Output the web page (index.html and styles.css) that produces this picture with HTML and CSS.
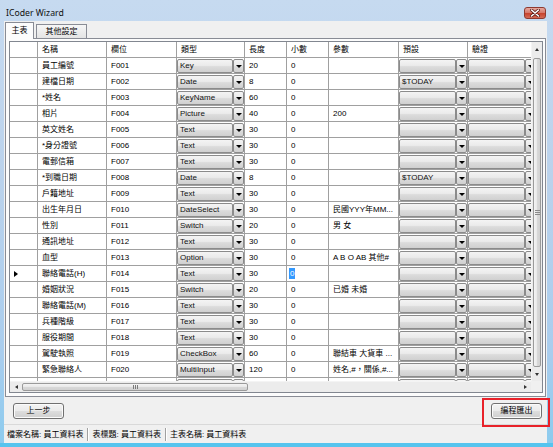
FILE: index.html
```html
<!DOCTYPE html>
<html>
<head>
<meta charset="utf-8">
<title>ICoder Wizard</title>
<link rel="stylesheet" href="styles.css">
</head>
<body>
<div class="window">
  <div class="titlebar">
    <span class="title">ICoder Wizard</span>
    <span class="close"><svg width="10" height="8" viewBox="0 0 10 8"><path d="M1.5 1 L8.5 7 M8.5 1 L1.5 7" stroke="#5a1a14" stroke-width="3" stroke-linecap="round"/><path d="M1.5 1 L8.5 7 M8.5 1 L1.5 7" stroke="#fff" stroke-width="1.6" stroke-linecap="round"/></svg></span>
  </div>
  <div class="client">
    <div class="tabs">
      <span class="tab active">主表</span>
      <span class="tab other">其他設定</span>
    </div>
    <div class="panel">
      <div class="grid">
        <div class="cells">
          <div class="row head">
            <div class="c rh"></div><div class="c">名稱</div><div class="c">欄位</div><div class="c">類型</div><div class="c">長度</div><div class="c">小數</div><div class="c">參數</div><div class="c">預設</div><div class="c">驗證</div>
          </div>
          <div class="row"><div class="c rh"></div><div class="c">員工編號</div><div class="c">F001</div><div class="c dd"><span class="dd-box">Key</span><span class="dd-btn"></span></div><div class="c">20</div><div class="c">0</div><div class="c"></div><div class="c dd"><span class="dd-box"></span><span class="dd-btn"></span></div><div class="c dd"><span class="dd-box"></span><span class="dd-btn"></span></div></div>
          <div class="row"><div class="c rh"></div><div class="c">建檔日期</div><div class="c">F002</div><div class="c dd"><span class="dd-box">Date</span><span class="dd-btn"></span></div><div class="c">8</div><div class="c">0</div><div class="c"></div><div class="c dd"><span class="dd-box">$TODAY</span><span class="dd-btn"></span></div><div class="c dd"><span class="dd-box"></span><span class="dd-btn"></span></div></div>
          <div class="row"><div class="c rh"></div><div class="c">*姓名</div><div class="c">F003</div><div class="c dd"><span class="dd-box">KeyName</span><span class="dd-btn"></span></div><div class="c">60</div><div class="c">0</div><div class="c"></div><div class="c dd"><span class="dd-box"></span><span class="dd-btn"></span></div><div class="c dd"><span class="dd-box"></span><span class="dd-btn"></span></div></div>
          <div class="row"><div class="c rh"></div><div class="c">相片</div><div class="c">F004</div><div class="c dd"><span class="dd-box">Picture</span><span class="dd-btn"></span></div><div class="c">40</div><div class="c">0</div><div class="c">200</div><div class="c dd"><span class="dd-box"></span><span class="dd-btn"></span></div><div class="c dd"><span class="dd-box"></span><span class="dd-btn"></span></div></div>
          <div class="row"><div class="c rh"></div><div class="c">英文姓名</div><div class="c">F005</div><div class="c dd"><span class="dd-box">Text</span><span class="dd-btn"></span></div><div class="c">30</div><div class="c">0</div><div class="c"></div><div class="c dd"><span class="dd-box"></span><span class="dd-btn"></span></div><div class="c dd"><span class="dd-box"></span><span class="dd-btn"></span></div></div>
          <div class="row"><div class="c rh"></div><div class="c">*身分證號</div><div class="c">F006</div><div class="c dd"><span class="dd-box">Text</span><span class="dd-btn"></span></div><div class="c">30</div><div class="c">0</div><div class="c"></div><div class="c dd"><span class="dd-box"></span><span class="dd-btn"></span></div><div class="c dd"><span class="dd-box"></span><span class="dd-btn"></span></div></div>
          <div class="row"><div class="c rh"></div><div class="c">電郵信箱</div><div class="c">F007</div><div class="c dd"><span class="dd-box">Text</span><span class="dd-btn"></span></div><div class="c">30</div><div class="c">0</div><div class="c"></div><div class="c dd"><span class="dd-box"></span><span class="dd-btn"></span></div><div class="c dd"><span class="dd-box"></span><span class="dd-btn"></span></div></div>
          <div class="row"><div class="c rh"></div><div class="c">*到職日期</div><div class="c">F008</div><div class="c dd"><span class="dd-box">Date</span><span class="dd-btn"></span></div><div class="c">8</div><div class="c">0</div><div class="c"></div><div class="c dd"><span class="dd-box">$TODAY</span><span class="dd-btn"></span></div><div class="c dd"><span class="dd-box"></span><span class="dd-btn"></span></div></div>
          <div class="row"><div class="c rh"></div><div class="c">戶籍地址</div><div class="c">F009</div><div class="c dd"><span class="dd-box">Text</span><span class="dd-btn"></span></div><div class="c">30</div><div class="c">0</div><div class="c"></div><div class="c dd"><span class="dd-box"></span><span class="dd-btn"></span></div><div class="c dd"><span class="dd-box"></span><span class="dd-btn"></span></div></div>
          <div class="row"><div class="c rh"></div><div class="c">出生年月日</div><div class="c">F010</div><div class="c dd"><span class="dd-box">DateSelect</span><span class="dd-btn"></span></div><div class="c">30</div><div class="c">0</div><div class="c">民國YYY年MM...</div><div class="c dd"><span class="dd-box"></span><span class="dd-btn"></span></div><div class="c dd"><span class="dd-box"></span><span class="dd-btn"></span></div></div>
          <div class="row"><div class="c rh"></div><div class="c">性別</div><div class="c">F011</div><div class="c dd"><span class="dd-box">Switch</span><span class="dd-btn"></span></div><div class="c">20</div><div class="c">0</div><div class="c">男 女</div><div class="c dd"><span class="dd-box"></span><span class="dd-btn"></span></div><div class="c dd"><span class="dd-box"></span><span class="dd-btn"></span></div></div>
          <div class="row"><div class="c rh"></div><div class="c">通訊地址</div><div class="c">F012</div><div class="c dd"><span class="dd-box">Text</span><span class="dd-btn"></span></div><div class="c">30</div><div class="c">0</div><div class="c"></div><div class="c dd"><span class="dd-box"></span><span class="dd-btn"></span></div><div class="c dd"><span class="dd-box"></span><span class="dd-btn"></span></div></div>
          <div class="row"><div class="c rh"></div><div class="c">血型</div><div class="c">F013</div><div class="c dd"><span class="dd-box">Option</span><span class="dd-btn"></span></div><div class="c">30</div><div class="c">0</div><div class="c">A B O AB 其他#</div><div class="c dd"><span class="dd-box"></span><span class="dd-btn"></span></div><div class="c dd"><span class="dd-box"></span><span class="dd-btn"></span></div></div>
          <div class="row"><div class="c rh"><span class="indicator"></span></div><div class="c">聯絡電話(H)</div><div class="c">F014</div><div class="c dd"><span class="dd-box">Text</span><span class="dd-btn"></span></div><div class="c">30</div><div class="c edit"><span class="sel">0</span></div><div class="c"></div><div class="c dd"><span class="dd-box"></span><span class="dd-btn"></span></div><div class="c dd"><span class="dd-box"></span><span class="dd-btn"></span></div></div>
          <div class="row"><div class="c rh"></div><div class="c">婚姻狀況</div><div class="c">F015</div><div class="c dd"><span class="dd-box">Switch</span><span class="dd-btn"></span></div><div class="c">20</div><div class="c">0</div><div class="c">已婚 未婚</div><div class="c dd"><span class="dd-box"></span><span class="dd-btn"></span></div><div class="c dd"><span class="dd-box"></span><span class="dd-btn"></span></div></div>
          <div class="row"><div class="c rh"></div><div class="c">聯絡電話(M)</div><div class="c">F016</div><div class="c dd"><span class="dd-box">Text</span><span class="dd-btn"></span></div><div class="c">30</div><div class="c">0</div><div class="c"></div><div class="c dd"><span class="dd-box"></span><span class="dd-btn"></span></div><div class="c dd"><span class="dd-box"></span><span class="dd-btn"></span></div></div>
          <div class="row"><div class="c rh"></div><div class="c">兵種階級</div><div class="c">F017</div><div class="c dd"><span class="dd-box">Text</span><span class="dd-btn"></span></div><div class="c">30</div><div class="c">0</div><div class="c"></div><div class="c dd"><span class="dd-box"></span><span class="dd-btn"></span></div><div class="c dd"><span class="dd-box"></span><span class="dd-btn"></span></div></div>
          <div class="row"><div class="c rh"></div><div class="c">服役期間</div><div class="c">F018</div><div class="c dd"><span class="dd-box">Text</span><span class="dd-btn"></span></div><div class="c">30</div><div class="c">0</div><div class="c"></div><div class="c dd"><span class="dd-box"></span><span class="dd-btn"></span></div><div class="c dd"><span class="dd-box"></span><span class="dd-btn"></span></div></div>
          <div class="row"><div class="c rh"></div><div class="c">駕駛執照</div><div class="c">F019</div><div class="c dd"><span class="dd-box">CheckBox</span><span class="dd-btn"></span></div><div class="c">60</div><div class="c">0</div><div class="c">聯結車 大貨車 ...</div><div class="c dd"><span class="dd-box"></span><span class="dd-btn"></span></div><div class="c dd"><span class="dd-box"></span><span class="dd-btn"></span></div></div>
          <div class="row"><div class="c rh"></div><div class="c">緊急聯絡人</div><div class="c">F020</div><div class="c dd"><span class="dd-box">MultiInput</span><span class="dd-btn"></span></div><div class="c">120</div><div class="c">0</div><div class="c">姓名,#，關係,#...</div><div class="c dd"><span class="dd-box"></span><span class="dd-btn"></span></div><div class="c dd"><span class="dd-box"></span><span class="dd-btn"></span></div></div>
          <div class="row"><div class="c rh"></div><div class="c"></div><div class="c"></div><div class="c dd"><span class="dd-box"></span><span class="dd-btn"></span></div><div class="c"></div><div class="c"></div><div class="c"></div><div class="c dd"><span class="dd-box"></span><span class="dd-btn"></span></div><div class="c dd"><span class="dd-box"></span><span class="dd-btn"></span></div></div>
        </div>
        <div class="vscroll">
          <div class="vs-btn"><span class="tri-up"></span></div>
          <div class="vs-thumb"><span class="grip-v"></span></div>
          <div class="vs-btn down"><span class="tri-down"></span></div>
        </div>
        <div class="hscroll">
          <div class="hs-btn"><span class="tri-left"></span></div>
          <div class="hs-thumb"><span class="grip-h"></span></div>
          <div class="hs-track"></div>
          <div class="hs-btn"><span class="tri-right"></span></div>
        </div>
        <div class="corner"></div>
      </div>
    </div>
    <div class="actions">
      <span class="btn">上一步</span>
      <span class="btn-wrap"><span class="btn">編程匯出</span></span>
    </div>
    <div class="status">
      <span class="st first">檔案名稱: 員工資料表</span>
      <span class="st">表標題: 員工資料表</span>
      <span class="st last">主表名稱: 員工資料表</span>
    </div>
  </div>
</div>
</body>
</html>
```

FILE: styles.css
```css
* { box-sizing: border-box; }
html, body { margin: 0; padding: 0; }
body {
  width: 553px;
  height: 447px;
  overflow: hidden;
  background: #fff;
  font-family: "Liberation Sans", "Noto Sans CJK TC", sans-serif;
  font-size: 8px;
  color: #000;
}
.window {
  width: 553px;
  height: 447px;
  display: flex;
  flex-direction: column;
  padding: 0 6px 0 4px;
  background: linear-gradient(to bottom, #c6daf0 0, #bad2ec 40%, #a9cdee 80%, #8ccbee 100%);
  border-bottom: 4px solid #56c4ee;
}
.titlebar {
  height: 21px;
  flex: none;
  display: flex;
  justify-content: space-between;
  align-items: flex-start;
}
.title {
  font-family: "Noto Sans", "Liberation Sans", sans-serif;
  font-size: 8.7px;
  line-height: 12px;
  margin: 7px 0 0 2px;
  color: #101010;
}
.close {
  width: 22px;
  height: 12px;
  margin: 7px 1px 0 0;
  border: 1px solid #8e3a30;
  border-radius: 3px;
  background: linear-gradient(to bottom, #e6a89e 0, #d77a6c 45%, #c8442f 55%, #d46a55 100%);
  display: flex;
  align-items: center;
  justify-content: center;
}
.client {
  flex: 1;
  background: #f0f0f0;
  display: flex;
  flex-direction: column;
}
.tabs {
  height: 17px;
  flex: none;
  display: flex;
  align-items: flex-end;
  padding-left: 1px;
  position: relative;
  z-index: 1;
}
.tab {
  height: 14px;
  border: 1px solid #898c95;
  border-bottom: none;
  text-align: center;
  line-height: 13px;
  background: linear-gradient(to bottom, #f6f6f6, #e4e4e4);
  margin-right: 1px;
}
.tab.active {
  width: 29px;
  height: 17px;
  margin-bottom: -1px;
  background: #fcfcfc;
  line-height: 16px;
}
.tab.other {
  width: 51px;
  margin-left: 1px;
}
.panel {
  height: 359px;
  flex: none;
  margin: 0 1px;
  border: 1px solid #898c95;
  background: #fcfcfc;
  padding: 2px 2px 3px 3px;
}
.grid {
  width: 534px;
  height: 352px;
  border: 1px solid #828790;
  background: #fff;
  display: grid;
  grid-template-columns: 521px 11px;
  grid-template-rows: 339px 11px;
}
.cells { overflow: hidden; }
.row {
  display: grid;
  grid-template-columns: 28px 69px 70px 68px 42px 42px 70px 69px 69px;
  width: 527px;
  height: 16px;
}
.c {
  border-right: 1px solid #a0a0a0;
  border-bottom: 1px solid #a0a0a0;
  padding-left: 4px;
  line-height: 15px;
  white-space: nowrap;
  overflow: hidden;
}
.head .c { background: #fff; }
.rh {
  padding-left: 4px;
  display: flex;
  align-items: center;
}
.indicator {
  width: 0;
  height: 0;
  border-left: 4px solid #000;
  border-top: 3px solid transparent;
  border-bottom: 3px solid transparent;
}
.dd {
  display: flex;
  padding: 1px 0 0 0;
}
.dd-box, .dd-btn {
  height: 14px;
  border: 1px solid #8b8b8b;
  border-radius: 2px;
  background: linear-gradient(to bottom, #f4f4f4 0, #ebebeb 45%, #dcdcdc 55%, #d0d0d0 100%);
}
.dd-box {
  flex: 1;
  min-width: 0;
  line-height: 12px;
  padding-left: 2px;
  overflow: hidden;
  color: #111;
}
.dd-btn {
  width: 11px;
  flex: none;
  display: flex;
  align-items: center;
  justify-content: center;
}
.dd-btn::after {
  content: "";
  width: 0;
  height: 0;
  border-left: 3px solid transparent;
  border-right: 3px solid transparent;
  border-top: 3px solid #000;
}
.edit { padding-left: 2px; }
.sel {
  display: inline-block;
  background: #3399ff;
  color: #fff;
  line-height: 11px;
  padding: 0 1px;
  vertical-align: middle;
}
.vscroll {
  grid-row: 1;
  grid-column: 2;
  display: flex;
  flex-direction: column;
  background: #ececec;
  border-left: 1px solid #f4f4f4;
}
.vs-btn {
  height: 15px;
  flex: none;
  display: flex;
  align-items: center;
  justify-content: center;
}
.vs-btn.down { height: 13px; }
.vs-thumb {
  flex: 1;
  margin: 1px 1px;
  border: 1px solid #9a9a9a;
  border-radius: 2px;
  background: linear-gradient(to right, #f4f4f4 0, #e8e8e8 50%, #d9d9d9 51%, #d2d2d2 100%);
  display: flex;
  align-items: center;
  justify-content: center;
}
.grip-v {
  width: 5px;
  height: 5px;
  border-top: 1px solid #8a8a8a;
  border-bottom: 1px solid #8a8a8a;
  background: linear-gradient(to bottom, transparent 1px, #8a8a8a 1px, #8a8a8a 2px, transparent 2px);
}
.hscroll {
  grid-row: 2;
  grid-column: 1;
  display: flex;
  background: #ececec;
  border-top: 1px solid #f4f4f4;
}
.hs-btn {
  width: 12px;
  flex: none;
  display: flex;
  align-items: center;
  justify-content: center;
}
.hs-thumb {
  width: 226px;
  flex: none;
  margin: 1px 0;
  border: 1px solid #9a9a9a;
  border-radius: 2px;
  background: linear-gradient(to bottom, #f4f4f4 0, #e8e8e8 50%, #d9d9d9 51%, #d2d2d2 100%);
  display: flex;
  align-items: center;
  justify-content: center;
}
.grip-h {
  width: 5px;
  height: 4px;
  border-left: 1px solid #7a7a7a;
  border-right: 1px solid #7a7a7a;
  background: linear-gradient(to right, transparent 1px, #7a7a7a 1px, #7a7a7a 2px, transparent 2px);
}
.hs-track { flex: 1; }
.corner {
  grid-row: 2;
  grid-column: 2;
  background: #f0f0f0;
}
.tri-up, .tri-down, .tri-left, .tri-right { width: 0; height: 0; }
.tri-up { border-left: 2.5px solid transparent; border-right: 2.5px solid transparent; border-bottom: 3px solid #333; }
.tri-down { border-left: 2.5px solid transparent; border-right: 2.5px solid transparent; border-top: 3px solid #333; }
.tri-left { border-top: 2.5px solid transparent; border-bottom: 2.5px solid transparent; border-right: 3px solid #333; }
.tri-right { border-top: 2.5px solid transparent; border-bottom: 2.5px solid transparent; border-left: 3px solid #333; }
.actions {
  height: 27px;
  flex: none;
  display: flex;
  justify-content: space-between;
  align-items: flex-start;
  padding: 6px 5px 0 9px;
}
.btn {
  display: block;
  width: 51px;
  height: 16px;
  border: 1px solid #707070;
  border-radius: 3px;
  background: linear-gradient(to bottom, #f3f3f3 0, #ebebeb 48%, #dddddd 52%, #cfcfcf 100%);
  box-shadow: inset 0 0 0 1px #fbfbfb;
  font-size: 8px;
  line-height: 14px;
  text-align: center;
}
.btn-wrap {
  position: relative;
  display: block;
}
.btn-wrap::after {
  content: "";
  position: absolute;
  top: -5px;
  left: -9px;
  right: -8px;
  bottom: -8px;
  border: 2px solid #e8222a;
}
.status {
  height: 19px;
  flex: none;
  display: flex;
  align-items: center;
  border-top: 1px solid #d9d9d9;
  padding-left: 3px;
}
.st {
  padding: 0 4px 0 4px;
  line-height: 13px;
  border-right: 1px solid #a0a0a0;
  box-shadow: 1px 0 0 #fff;
}
.st.first { padding-left: 0; }
.st.last { border-right: none; box-shadow: none; }
```
